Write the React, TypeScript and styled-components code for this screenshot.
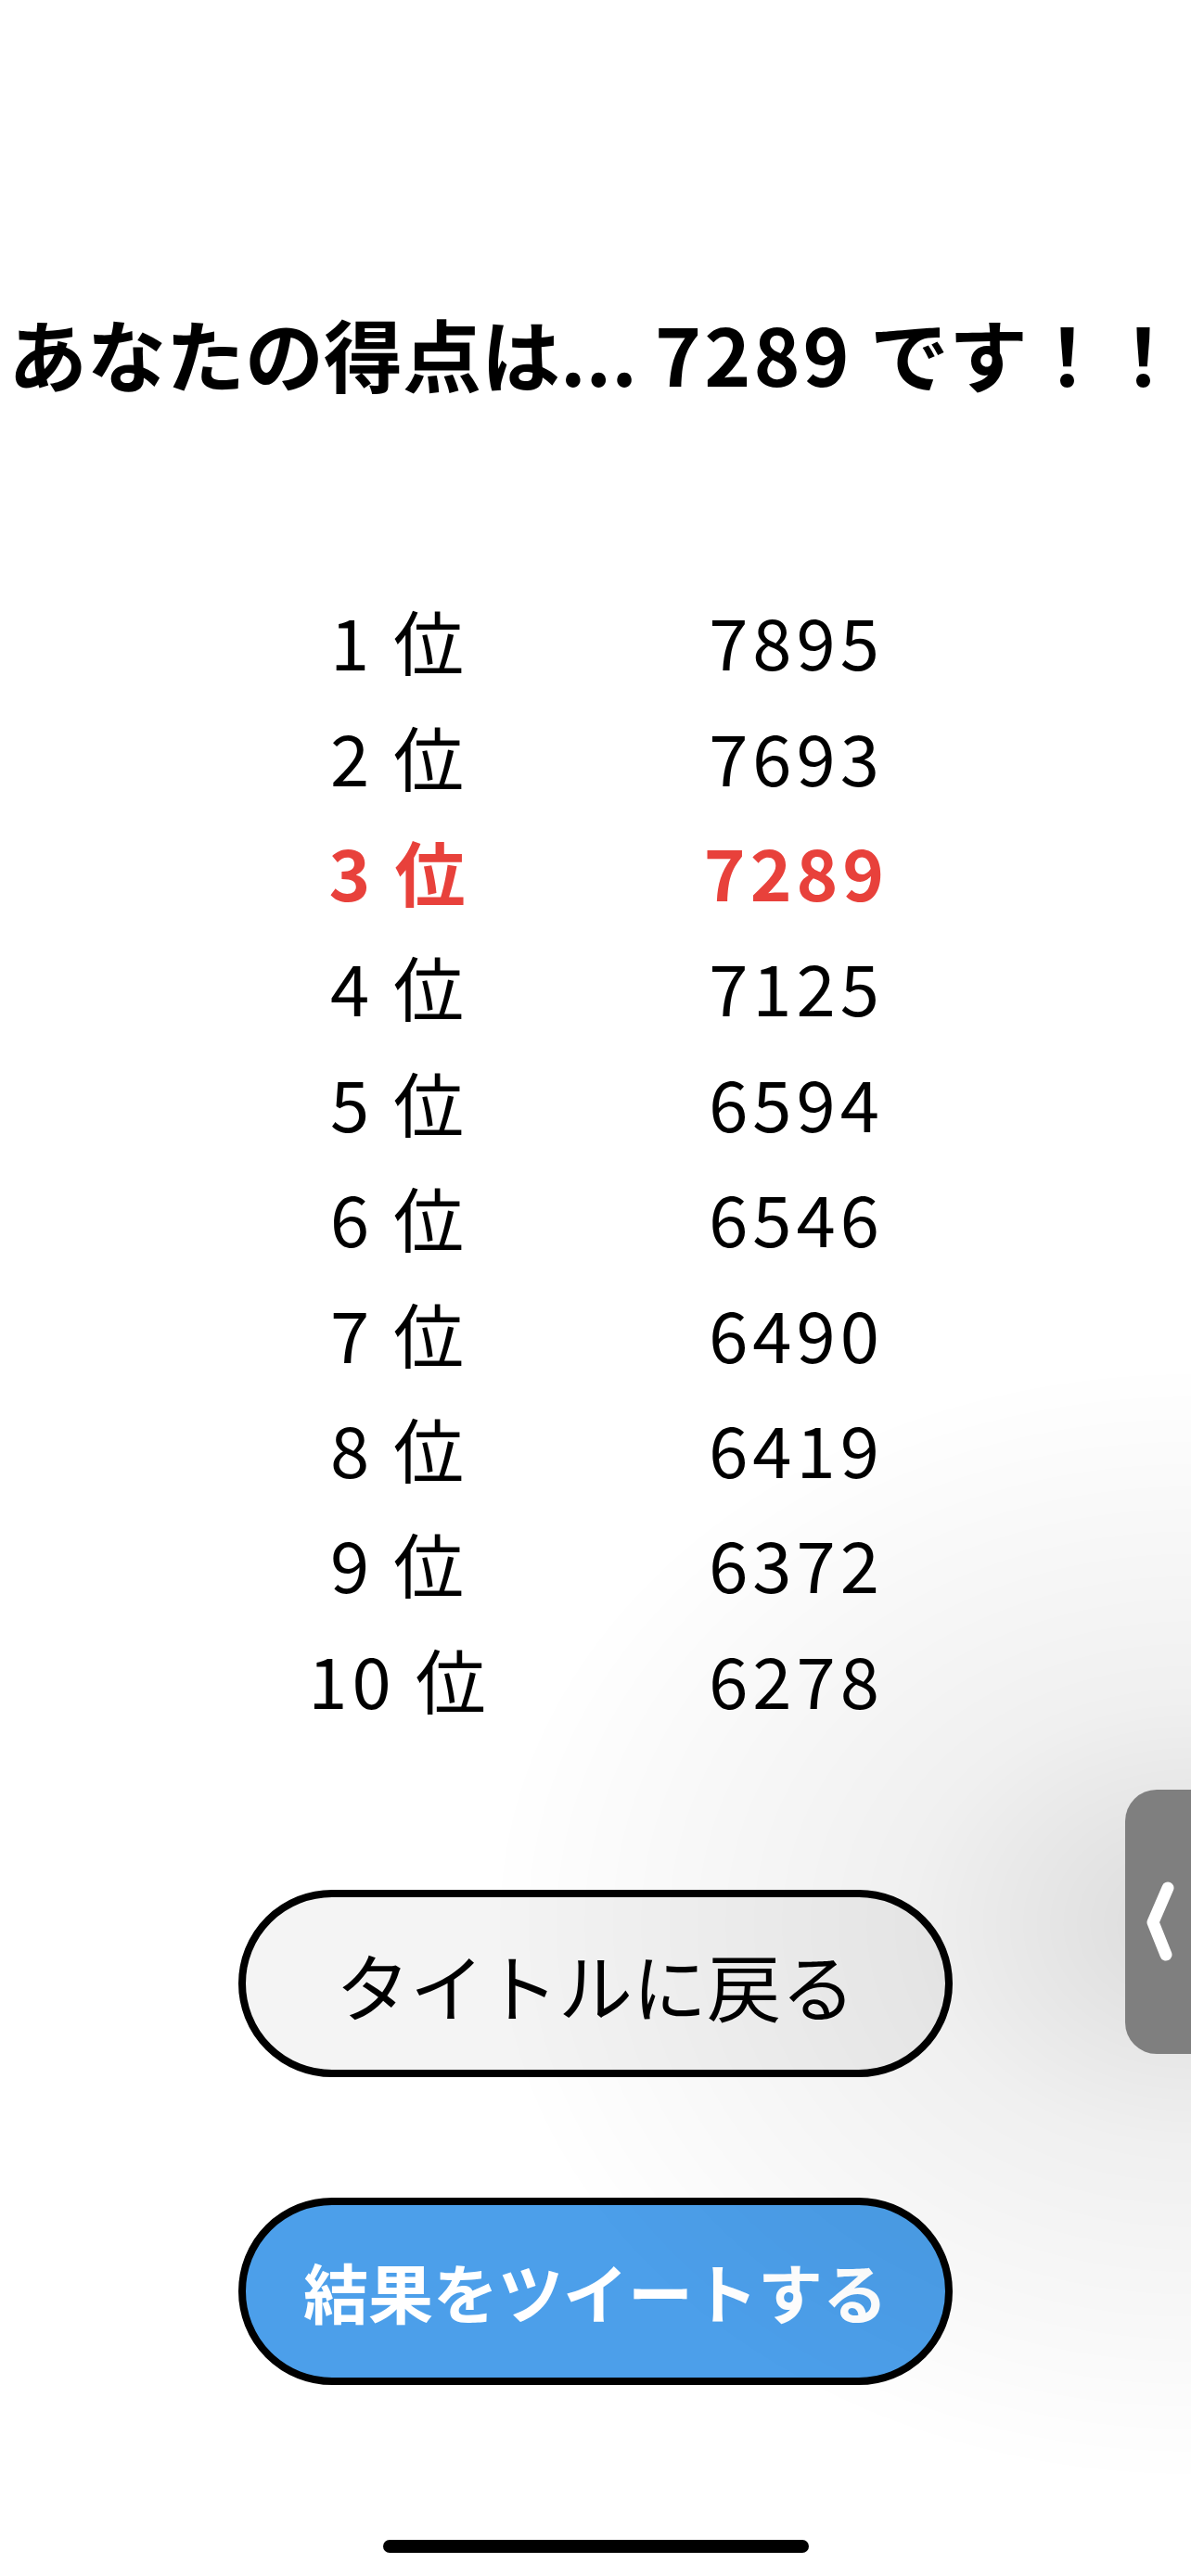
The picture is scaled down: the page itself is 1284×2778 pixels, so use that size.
import { createGlobalStyle } from "styled-components";
import styled from "styled-components";

// global page reset, phone-ish white canvas
const GlobalStyle = createGlobalStyle`
  html, body {
    margin: 0;
    padding: 0;
    background: #ffffff;
  }
  body {
    font-family: "Noto Sans CJK JP", "Noto Sans", sans-serif;
    color: #000000;
  }
`;

type Score = { rank: number; score: number };

const scores: Score[] = [
  { rank: 1, score: 7895 },
  { rank: 2, score: 7693 },
  { rank: 3, score: 7289 },
  { rank: 4, score: 7125 },
  { rank: 5, score: 6594 },
  { rank: 6, score: 6546 },
  { rank: 7, score: 6490 },
  { rank: 8, score: 6419 },
  { rank: 9, score: 6372 },
  { rank: 10, score: 6278 },
];

const myScore = 7289;

const Page = styled.div`
  width: 1284px;
  min-height: 2778px;
  display: flex;
  flex-direction: column;
  align-items: center;
  padding-top: 330px;
  box-sizing: border-box;
  overflow: hidden;
`;

const Title = styled.h1`
  margin: 0;
  font-size: 85px;
  line-height: 100px;
  font-weight: 700;
  white-space: nowrap;
`;

const TitleNum = styled.span`
  letter-spacing: 3px;
`;

const Bang = styled.span`
  letter-spacing: -3px;
`;

const Ranking = styled.div`
  margin-top: 198px;
  display: grid;
  grid-template-columns: 428px 428px;
  grid-auto-rows: 124.4px;
`;

const Cell = styled.div<{ $mine?: boolean }>`
  display: flex;
  align-items: center;
  justify-content: center;
  font-size: 76px;
  font-weight: ${(props) => (props.$mine ? 700 : 400)};
  color: ${(props) => (props.$mine ? "#e8413b" : "#000000")};
`;

const Num = styled.span`
  letter-spacing: 5px;
  margin-right: -5px;
`;

const Gap = styled.span`
  display: inline-block;
  width: 26px;
`;

const Buttons = styled.div`
  margin-top: 166px;
  display: flex;
  flex-direction: column;
  gap: 130px;
`;

const Button = styled.button<{ $primary?: boolean }>`
  width: 770px;
  height: 202px;
  border: 8px solid #000000;
  border-radius: 101px;
  box-sizing: border-box;
  background: ${(props) => (props.$primary ? "#4c9fea" : "#f4f4f4")};
  color: ${(props) => (props.$primary ? "#ffffff" : "#000000")};
  font-family: "Noto Sans CJK JP", "Noto Sans", sans-serif;
  font-size: ${(props) => (props.$primary ? "70px" : "80px")};
  font-weight: ${(props) => (props.$primary ? 700 : 400)};
  display: flex;
  align-items: center;
  justify-content: center;
  padding: 0;
`;

// soft shade the floating tab throws on the page
const Glow = styled.div`
  position: fixed;
  right: 0;
  top: 1470px;
  width: 760px;
  height: 1210px;
  pointer-events: none;
  background: radial-gradient(
    ellipse 100% 50% at 100% 50%,
    rgba(0, 0, 0, 0.14) 0%,
    rgba(0, 0, 0, 0.06) 40%,
    rgba(0, 0, 0, 0) 100%
  );
`;

// overlay bits: the assistive side tab and the home indicator
const SideTab = styled.div`
  position: fixed;
  right: 0;
  top: 1930px;
  width: 71px;
  height: 285px;
  background: #7f7f7f;
  border-radius: 34px 0 0 34px;
  display: flex;
  align-items: center;
  padding-left: 22px;
  box-sizing: border-box;
`;

const HomeBar = styled.div`
  position: fixed;
  bottom: 25px;
  left: 413px;
  width: 459px;
  height: 14px;
  border-radius: 7px;
  background: #000000;
`;

export default function App() {
  return (
    <>
      <GlobalStyle />
      <Page>
        <Title>
          あなたの得点は... <TitleNum>{myScore}</TitleNum> です<Bang>！</Bang>！
        </Title>
        <Ranking>
          {scores.map((s) => {
            const mine = s.score === myScore;
            return [
              <Cell key={`r${s.rank}`} $mine={mine}>
                <Num>{s.rank}</Num>
                <Gap />位
              </Cell>,
              <Cell key={`s${s.rank}`} $mine={mine}>
                <Num>{s.score}</Num>
              </Cell>,
            ];
          })}
        </Ranking>
        <Buttons>
          <Button>タイトルに戻る</Button>
          <Button $primary>結果をツイートする</Button>
        </Buttons>
      </Page>
      <Glow />
      <SideTab>
        <svg width="34" height="90" viewBox="0 0 34 90">
          <path
            d="M24 8 L8 45 L22 80"
            fill="none"
            stroke="#ffffff"
            strokeWidth="13"
            strokeLinecap="round"
            strokeLinejoin="round"
          />
        </svg>
      </SideTab>
      <HomeBar />
    </>
  );
}
